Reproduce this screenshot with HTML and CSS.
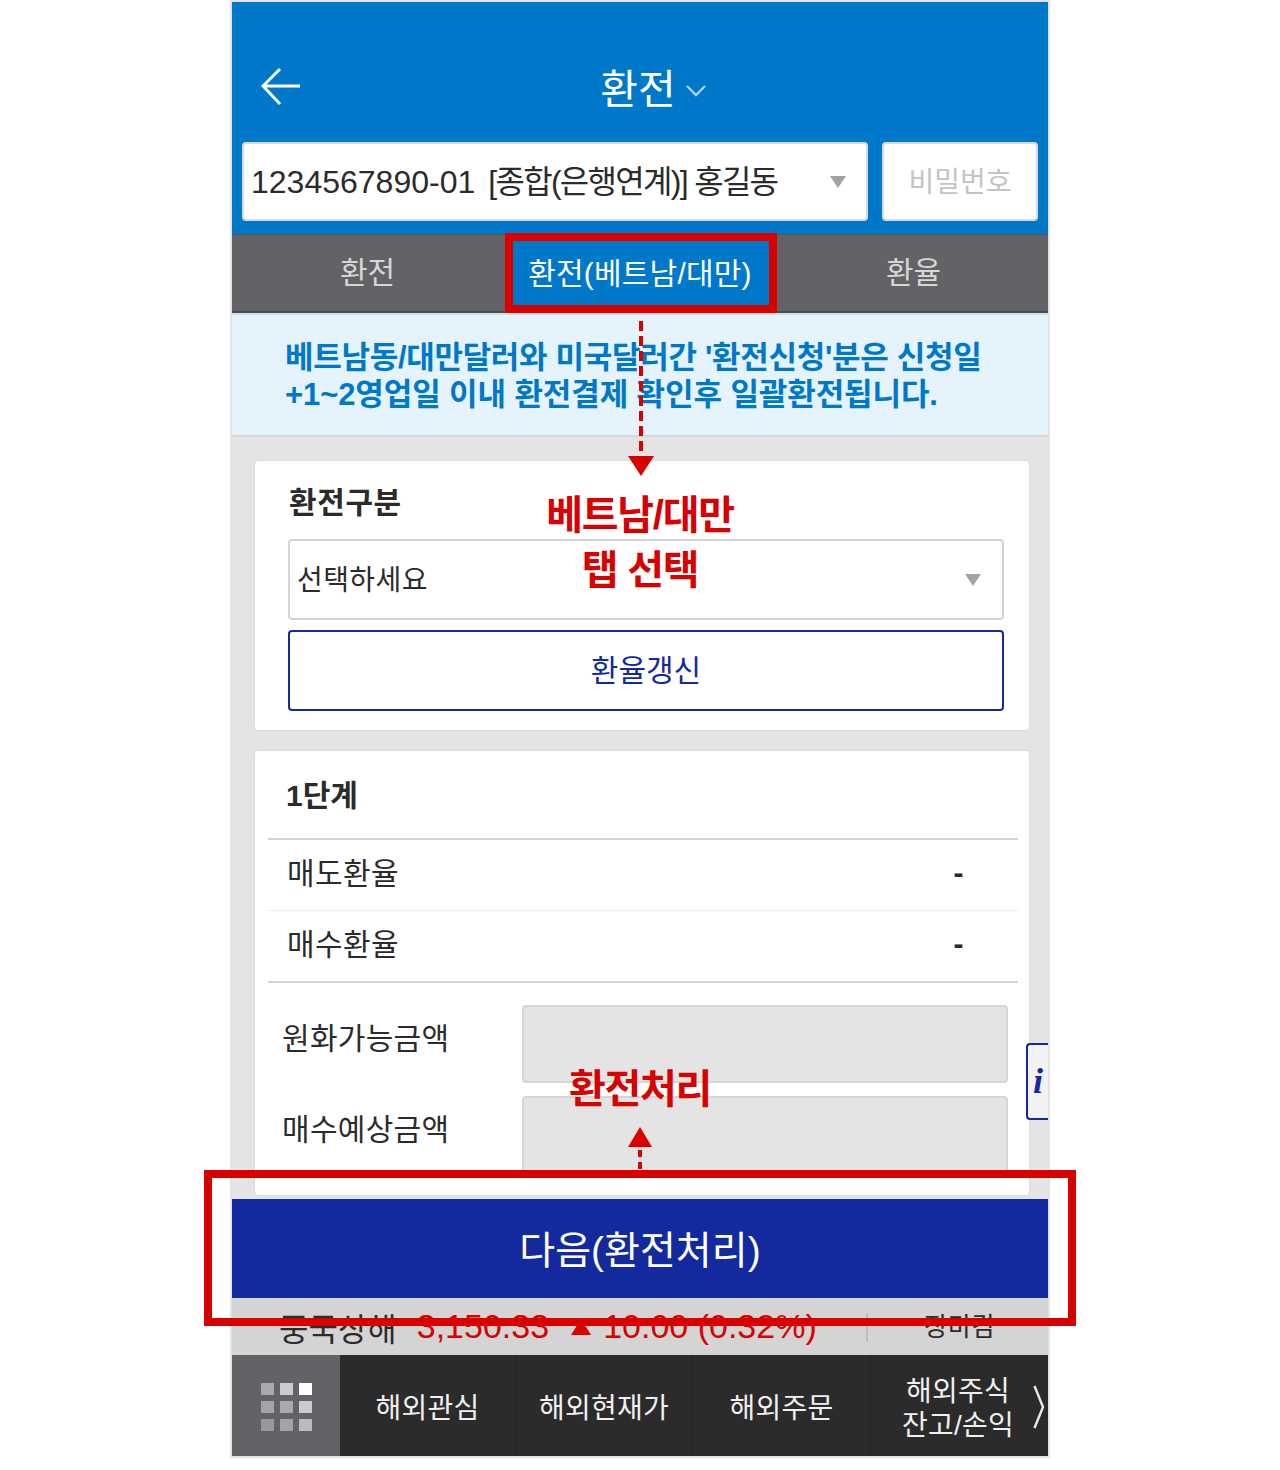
FILE: index.html
```html
<!DOCTYPE html>
<html lang="ko">
<head>
    <meta charset="UTF-8">
    <meta name="viewport" content="width=device-width, initial-scale=1.0">
    <title>환전</title>
    <link rel="stylesheet" href="styles.css">
</head>
<body>
    <div class="stage">
        <div class="phone">
            <header class="top">
                <div class="title-row">
                    <svg class="back" width="40" height="40" viewBox="0 0 40 40"><path d="M19 2 L2 19 L19 37 M2 19 H39" fill="none" stroke="#fff" stroke-width="3"/></svg>
                    <h1>환전</h1>
                    <svg class="chev" width="20" height="12" viewBox="0 0 20 12"><path d="M1 1 L10 10 L19 1" fill="none" stroke="#a9d3f0" stroke-width="2.4"/></svg>
                </div>
                <div class="account-row">
                    <div class="account">
                        <span><span class="acc-no">1234567890-01</span><span class="acc-name">[종합(은행연계)] 홍길동</span></span>
                        <i class="caret"></i>
                    </div>
                    <div class="password">비밀번호</div>
                </div>
            </header>

            <nav class="tabs">
                <div class="tab">환전</div>
                <div class="tab active">환전(베트남/대만)</div>
                <div class="tab tab-rate">환율</div>
            </nav>

            <div class="notice">
                베트남동/대만달러와 미국달러간 '환전신청'분은 신청일<br>
                <span class="notice-line2">+1~2영업일 이내 환전결제 확인후 일괄환전됩니다.</span>
            </div>

            <main class="content">
                <section class="card card-select">
                    <h2>환전구분</h2>
                    <div class="select">
                        <span>선택하세요</span>
                        <i class="caret"></i>
                    </div>
                    <div class="btn-rate">환율갱신</div>
                </section>

                <section class="card card-step">
                    <h2 class="step-title">1단계</h2>
                    <div class="rate-row first"><span>매도환율</span><b>-</b></div>
                    <div class="rate-row last"><span>매수환율</span><b>-</b></div>
                    <div class="form-row">
                        <label>원화가능금액</label>
                        <div class="field"></div>
                    </div>
                    <div class="form-row">
                        <label>매수예상금액</label>
                        <div class="field"></div>
                    </div>
                </section>
            </main>

            <div class="btn-next">다음(환전처리)</div>

            <div class="ticker">
                <span class="market">중국상해</span>
                <span class="price">3,150.33</span>
                <span class="change"><i class="up"></i>10.00 (0.32%)</span>
                <span class="status">장마감</span>
            </div>

            <div class="bottom-nav">
                <div class="nav-grid">
                    <i class="c1"></i><i class="c2"></i><i class="c3"></i>
                    <i class="c4"></i><i class="c1"></i><i class="c2"></i>
                    <i class="c5"></i><i class="c4"></i><i class="c6"></i>
                </div>
                <div class="nav-item">해외관심</div>
                <div class="nav-item">해외현재가</div>
                <div class="nav-item">해외주문</div>
                <div class="nav-item last-item">해외주식<br>잔고/손익</div>
                <svg class="nav-more" width="12" height="44" viewBox="0 0 12 44"><path d="M1.5 1 L10 22 L1.5 43" fill="none" stroke="#e8e8e8" stroke-width="2.4"/></svg>
            </div>

            <div class="info-tab">i</div>
        </div>

        <!-- annotations on top of the screen -->
        <div class="mark mark-tab"></div>
        <div class="mark mark-next"></div>
        <div class="dash dash-down"></div>
        <div class="arrow arrow-down"></div>
        <div class="note note-tab">베트남/대만<br>탭 선택</div>
        <div class="note note-next">환전처리</div>
        <div class="arrow arrow-up"></div>
        <div class="dash dash-up"></div>
    </div>
</body>
</html>
```

FILE: styles.css
```css
* {
    box-sizing: border-box;
}
body {
    margin: 0;
    background-color: #fff;
    font-family: "Liberation Sans", "Noto Sans CJK KR", sans-serif;
    color: #2b2b2b;
}
.stage {
    position: relative;
    width: 1280px;
    height: 1470px;
    padding-top: 2px;
}
.phone {
    position: relative;
    width: 816px;
    height: 1454px;
    margin-left: 232px;
    display: flex;
    flex-direction: column;
    box-shadow: 0 0 0 2px #e4e4e4;
}

/* header */
.top {
    height: 232px;
    background-color: #0078c9;
}
.title-row {
    position: relative;
    height: 140px;
    display: flex;
    justify-content: center;
    align-items: center;
    padding-top: 36px;
    padding-left: 26px;
}
.title-row h1 {
    margin: 0 10px 0 0;
    font-size: 41px;
    font-weight: 400;
    color: #fff;
    line-height: 60px;
}
.back {
    position: absolute;
    left: 29px;
    top: 65px;
}
.chev {
    margin-top: 2px;
}
.account-row {
    display: flex;
    gap: 14px;
    padding: 0 10px;
    height: 79px;
}
.account {
    width: 626px;
    background-color: #fff;
    border: 2px solid #d9d9d9;
    border-radius: 4px;
    display: flex;
    align-items: center;
    justify-content: space-between;
    padding: 0 20px 6px 7px;
    font-size: 32px;
    white-space: nowrap;
}
.acc-no {
    letter-spacing: 0;
}
.acc-name {
    margin-left: 13px;
    letter-spacing: -1.7px;
}
.account .caret {
    margin-top: 6px;
}
.password {
    width: 156px;
    background-color: #fff;
    border: 2px solid #d9d9d9;
    border-radius: 4px;
    display: flex;
    align-items: center;
    justify-content: center;
    padding-bottom: 4px;
    font-size: 28px;
    color: #c4c4c4;
}
.caret {
    width: 0;
    height: 0;
    border-left: 8px solid transparent;
    border-right: 8px solid transparent;
    border-top: 12px solid #a3a3a3;
}

/* tabs */
.tabs {
    display: grid;
    grid-template-columns: 273px 272px 271px;
    height: 81px;
    background-color: #636267;
    border-top: 1px solid #55555a;
    border-bottom: 2px solid #d3dde4;
}
.tab {
    display: flex;
    align-items: center;
    justify-content: center;
    padding: 0 2px 6px 0;
    font-size: 30px;
    color: #d6d6d6;
    border-bottom: 2px solid #4c4c50;
}
.tab.active {
    background-color: #0078c9;
    color: #fff;
    padding-right: 2px;
    letter-spacing: 0.2px;
    border-bottom: none;
}
.tab.tab-rate {
    padding: 0 0 6px 2px;
}

/* notice */
.notice {
    height: 122px;
    padding: 24px 0 0 53px;
    background-color: #e5f3fd;
    border-bottom: 2px solid #d6d6d6;
    font-size: 31px;
    font-weight: 700;
    line-height: 37px;
    letter-spacing: -0.3px;
    color: #0078c9;
    white-space: nowrap;
}
.notice-line2 {
    letter-spacing: -0.1px;
}

/* body */
.content {
    flex: 1;
    min-height: 0;
    background-color: #e4e4e4;
    padding: 24px 19px 4px 23px;
    display: flex;
    flex-direction: column;
    gap: 21px;
    overflow: hidden;
}
.card {
    background-color: #fff;
    border-radius: 3px;
    box-shadow: 0 0 2px #c8c8c8;
}
.card h2 {
    margin: 0;
    font-size: 30px;
    font-weight: 700;
    color: #2b2b2b;
}
.card-select {
    height: 269px;
    padding: 18px 25px 0 33px;
}
.card-select h2 {
    height: 60px;
    padding-left: 1px;
    line-height: 48px;
    letter-spacing: 0.6px;
}
.select {
    height: 81px;
    border: 2px solid #d4d4d4;
    border-radius: 4px;
    display: flex;
    align-items: center;
    justify-content: space-between;
    padding: 0 21px 4px 7px;
    font-size: 28px;
    letter-spacing: 0.4px;
}
.select .caret {
    margin-top: 4px;
}
.btn-rate {
    height: 81px;
    margin-top: 10px;
    border: 2px solid #132a9e;
    border-radius: 4px;
    display: flex;
    align-items: center;
    justify-content: center;
    padding-bottom: 6px;
    font-size: 30px;
    color: #132a9e;
}
.card-step {
    flex: 1;
    padding: 0 11px 0 13px;
}
.card-step .step-title {
    height: 89px;
    line-height: 90px;
    padding-left: 18px;
    border-bottom: 2px solid #d4d4d4;
}
.rate-row {
    height: 71px;
    display: flex;
    align-items: center;
    justify-content: space-between;
    padding: 0 54px 8px 19px;
    font-size: 30px;
    letter-spacing: 0.4px;
    border-bottom: 1px solid #ececec;
}
.rate-row.last {
    height: 72px;
    border-bottom: 2px solid #d4d4d4;
}
.rate-row b {
    font-weight: 700;
    margin-top: 4px;
}
.form-row {
    display: flex;
    justify-content: space-between;
    height: 78px;
    margin-top: 13px;
    padding-left: 14px;
    font-size: 30px;
}
.form-row label {
    line-height: 68px;
    letter-spacing: 0.3px;
}
.rate-row.last + .form-row {
    margin-top: 22px;
}
.field {
    width: 486px;
    height: 78px;
    margin-right: 10px;
    background-color: #e4e4e4;
    border: 2px solid #d6d6d6;
    border-radius: 4px;
}

/* bottom */
.btn-next {
    height: 99px;
    background-color: #132a9e;
    color: #fff;
    display: flex;
    align-items: center;
    justify-content: center;
    padding-bottom: 4px;
    font-size: 39px;
}
.ticker {
    position: relative;
    height: 57px;
    background-color: #d4d4d4;
    display: flex;
    align-items: center;
    white-space: nowrap;
}
.market {
    margin-left: 47px;
    font-size: 32px;
}
.price {
    margin-left: 20px;
    font-size: 34px;
    color: #d90000;
}
.change {
    margin-left: 22px;
    font-size: 34px;
    color: #d90000;
    display: flex;
    align-items: center;
}
.up {
    width: 0;
    height: 0;
    margin-right: 12px;
    border-left: 10px solid transparent;
    border-right: 10px solid transparent;
    border-bottom: 16px solid #d90000;
}
.status {
    position: absolute;
    left: 634px;
    top: 15px;
    height: 29px;
    padding-left: 56px;
    border-left: 2px solid #bcbcbc;
    font-size: 26px;
    line-height: 29px;
}
.bottom-nav {
    position: relative;
    height: 101px;
    background-color: #2b2b2b;
    display: grid;
    grid-template-columns: 108px 176px 177px 178px 177px;
}
.nav-grid {
    background-color: #636267;
    display: grid;
    grid-template-columns: repeat(3, 13px);
    grid-template-rows: repeat(3, 12px);
    gap: 6px;
    align-content: center;
    justify-content: center;
    padding-top: 2px;
}
.nav-grid i {
    display: block;
}
.c1 { background-color: #aaa; }
.c2 { background-color: #ccc; }
.c3 { background-color: #fff; }
.c4 { background-color: #a4a4a4; }
.c5 { background-color: #999; }
.c6 { background-color: #bbb; }
.nav-item {
    display: flex;
    align-items: center;
    justify-content: center;
    padding-top: 6px;
    font-size: 28px;
    line-height: 34px;
    letter-spacing: 0.2px;
    color: #f0f0f0;
    text-align: center;
    border-right: 1px solid #222;
}
.nav-item.last-item {
    border-right: none;
    padding-right: 3px;
}
.nav-more {
    position: absolute;
    right: 3px;
    top: 30px;
}
.info-tab {
    position: absolute;
    right: 0;
    top: 1041px;
    width: 22px;
    height: 77px;
    background-color: #f2f2f2;
    border: 2px solid #132a9e;
    border-right: none;
    border-radius: 4px 0 0 4px;
    font-family: "Liberation Serif", serif;
    font-style: italic;
    font-weight: 700;
    font-size: 36px;
    line-height: 72px;
    text-align: center;
    color: #132a9e;
}

/* annotations */
.mark {
    position: absolute;
    border: 8px solid #d90000;
}
.mark-tab {
    left: 505px;
    top: 233px;
    width: 272px;
    height: 80px;
}
.mark-next {
    left: 204px;
    top: 1170px;
    width: 872px;
    height: 156px;
}
.dash {
    position: absolute;
    left: 639px;
    width: 4px;
    background-image: repeating-linear-gradient(to bottom, #d90000 0 10px, transparent 10px 15px);
}
.dash-down {
    top: 321px;
    height: 136px;
}
.dash-up {
    left: 638px;
    top: 1150px;
    height: 20px;
    background-image: repeating-linear-gradient(to bottom, #d90000 0 7px, transparent 7px 12px);
}
.arrow {
    position: absolute;
    width: 0;
    height: 0;
    border-left: 13px solid transparent;
    border-right: 13px solid transparent;
}
.arrow-down {
    left: 628px;
    top: 456px;
    border-top: 20px solid #d90000;
}
.arrow-up {
    left: 628px;
    top: 1127px;
    border-left-width: 12px;
    border-right-width: 12px;
    border-bottom: 20px solid #d90000;
}
.note {
    position: absolute;
    left: 440px;
    width: 400px;
    text-align: center;
    font-size: 40px;
    font-weight: 700;
    color: #d90000;
    letter-spacing: -1.3px;
}
.note-tab {
    top: 488px;
    line-height: 55px;
}
.note-next {
    top: 1060px;
    line-height: 58px;
}
```
